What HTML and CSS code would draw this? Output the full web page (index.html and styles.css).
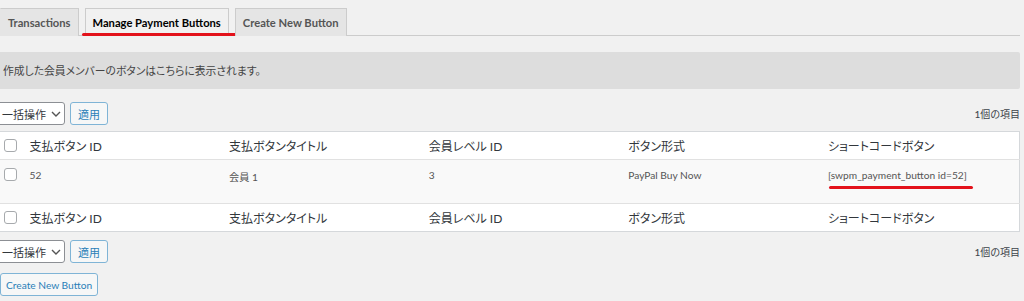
FILE: index.html
```html
<!DOCTYPE html>
<html lang="ja">
<head>
  <meta charset="UTF-8">
  <meta name="viewport" content="width=device-width, initial-scale=1">
  <title>Manage Payment Buttons</title>
  <link rel="stylesheet" href="styles.css">
</head>
<body>
  <div class="tabs">
    <a class="tab">Transactions</a>
    <a class="tab active">Manage Payment Buttons<span class="mark"></span></a>
    <a class="tab">Create New Button</a>
  </div>

  <div class="wrap">
    <div class="notice">作成した会員メンバーのボタンはこちらに表示されます。</div>

    <div class="tablenav top">
      <div class="bulk">
        <div class="select">一括操作
          <svg width="10" height="6" viewBox="0 0 10 6"><path d="M1 1l4 4 4-4" fill="none" stroke="#555" stroke-width="1.4"/></svg>
        </div>
        <button class="btn">適用</button>
      </div>
      <span class="count">1個の項目</span>
    </div>

    <table class="list">
      <thead>
        <tr>
          <th class="cb"><span class="box"></span></th>
          <th>支払ボタン ID</th>
          <th>支払ボタンタイトル</th>
          <th>会員レベル ID</th>
          <th>ボタン形式</th>
          <th>ショートコードボタン</th>
        </tr>
      </thead>
      <tbody>
        <tr>
          <td class="cb"><span class="box"></span></td>
          <td>52</td>
          <td>会員 1</td>
          <td>3</td>
          <td>PayPal Buy Now</td>
          <td><span class="code">[swpm_payment_button id=52]<span class="mark"></span></span></td>
        </tr>
      </tbody>
      <tfoot>
        <tr>
          <th class="cb"><span class="box"></span></th>
          <th>支払ボタン ID</th>
          <th>支払ボタンタイトル</th>
          <th>会員レベル ID</th>
          <th>ボタン形式</th>
          <th>ショートコードボタン</th>
        </tr>
      </tfoot>
    </table>

    <div class="tablenav bottom">
      <div class="bulk">
        <div class="select">一括操作
          <svg width="10" height="6" viewBox="0 0 10 6"><path d="M1 1l4 4 4-4" fill="none" stroke="#555" stroke-width="1.4"/></svg>
        </div>
        <button class="btn">適用</button>
      </div>
      <span class="count">1個の項目</span>
    </div>

    <button class="btn create">Create New Button</button>
  </div>
</body>
</html>
```

FILE: styles.css
```css
body {
  margin: 0;
  background-color: #f1f1f1;
  color: #32373c;
  font-family: Lato, "Noto Sans CJK JP", sans-serif;
  font-size: 12px;
  font-feature-settings: "palt";
}
.tabs {
  display: flex;
  gap: 6px;
  padding-top: 8px;
  margin-right: 4px;
  border-bottom: 1px solid #ccc;
  height: 27px;
}
.tab {
  position: relative;
  display: block;
  box-sizing: border-box;
  height: 28px;
  padding: 0 7px;
  border: 1px solid #ccc;
  border-bottom: none;
  background-color: #e5e5e5;
  color: #555;
  font-size: 11.2px;
  font-weight: 700;
  line-height: 27px;
  white-space: nowrap;
}
.tabs .tab:first-child {
  border-left-color: #e5e5e5;
}
.tab.active {
  background-color: #f1f1f1;
  color: #000;
}
.mark {
  position: absolute;
  height: 3px;
  border-radius: 2px;
  background-color: #e3121b;
}
.tab .mark {
  left: -4px;
  right: -10px;
  bottom: 0;
}
.wrap {
  margin: 0 4px 0 -8px;
}
.notice {
  margin-top: 16px;
  height: 37px;
  padding-left: 11px;
  background-color: #dddddd;
  border-radius: 2px;
  color: #444;
  font-size: 10.8px;
  line-height: 37px;
}
.tablenav {
  display: flex;
  justify-content: space-between;
  align-items: center;
  height: 23px;
}
.tablenav.top {
  margin-top: 13px;
  margin-bottom: 6px;
}
.tablenav.bottom {
  margin-top: 8px;
  margin-bottom: 10px;
}
.bulk {
  display: flex;
  gap: 5px;
}
.select {
  display: flex;
  align-items: center;
  gap: 5px;
  box-sizing: border-box;
  width: 73px;
  height: 23px;
  padding-left: 9px;
  background-color: #fff;
  border: 1px solid #8c8f94;
  border-radius: 3px;
  color: #32373c;
  font-size: 11px;
  white-space: nowrap;
}
.btn {
  box-sizing: border-box;
  height: 23px;
  padding: 0 7px;
  background-color: #f6f7f7;
  border: 1px solid #7fb4d6;
  border-radius: 3px;
  color: #2a7fb8;
  font-family: inherit;
  font-size: 11px;
  white-space: nowrap;
}
.count {
  font-size: 10px;
  color: #3c434a;
}
.btn.create {
  margin-left: 8px;
  padding: 0 5px;
  font-size: 10.2px;
}
.list {
  width: 100%;
  border-collapse: collapse;
  table-layout: fixed;
  background-color: #fff;
  border: 1px solid #d5d8db;
}
.list th,
.list td {
  padding: 0 8px;
  text-align: left;
  font-weight: normal;
  white-space: nowrap;
}
.list th {
  height: 27px;
  font-size: 12px;
  color: #32373c;
}
.list th.cb,
.list td.cb {
  width: 29px;
  box-sizing: border-box;
  padding: 0 0 0 11px;
}
.list thead tr {
  border-bottom: 1px solid #e1e1e1;
}
.list tfoot tr {
  border-top: 1px solid #e1e1e1;
}
.list tbody tr {
  background-color: #f9f9f9;
}
.list td {
  height: 44px;
  padding-top: 9px;
  vertical-align: top;
  font-size: 10.2px;
  color: #555;
  box-sizing: border-box;
}
.list td.cb {
  padding-top: 8px;
}
.box {
  display: block;
  box-sizing: border-box;
  width: 13px;
  height: 13px;
  background-color: #fff;
  border: 1px solid #a7aaad;
  border-radius: 3px;
}
.code {
  position: relative;
  display: inline-block;
}
.code .mark {
  left: 1px;
  right: -6px;
  bottom: -8px;
}
```
